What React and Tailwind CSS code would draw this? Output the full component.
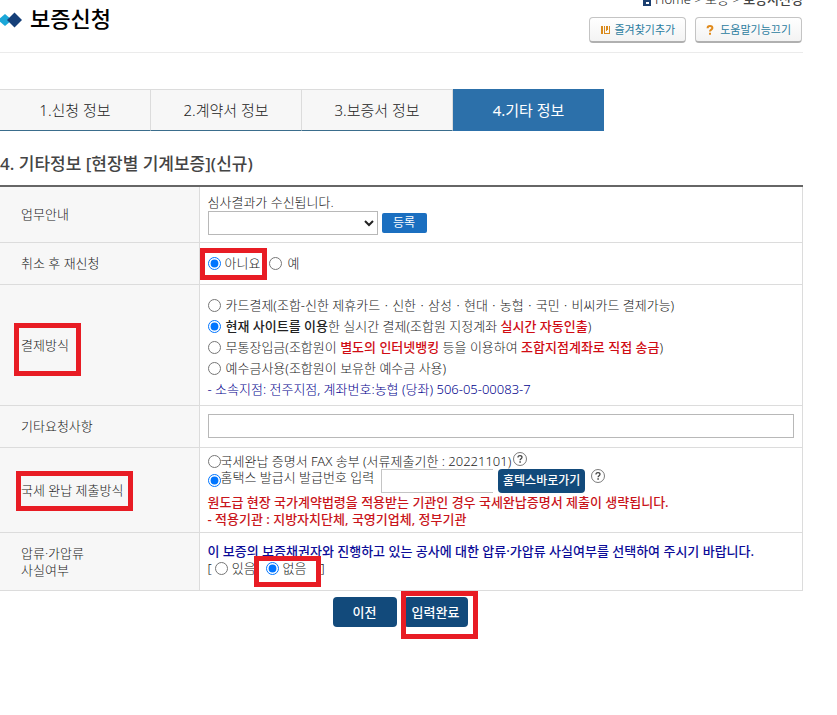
import { useState } from "react";

const steps = ["1.신청 정보", "2.계약서 정보", "3.보증서 정보", "4.기타 정보"];

// red frame around a field that needs attention; goes inside a relative parent
function Mark({ className }) {
  return <span aria-hidden="true" className={`absolute border-[5px] border-[#e81c24] pointer-events-none ${className}`} />;
}

function Radio({ id, name, value, checked, onChange, className = "" }) {
  return (
    <input
      type="radio"
      id={id}
      name={name}
      value={value}
      checked={checked}
      onChange={() => onChange(value)}
      className={`w-[13px] h-[13px] shrink-0 ${className}`}
    />
  );
}

function Row({ label, cellClass, children }) {
  return (
    <tr className="border-b border-[#dcdcdc]">
      <th scope="row" className="w-[199px] bg-[#f7f7f7] border-r border-[#dcdcdc] pl-[21px] text-left font-light align-middle">
        {label}
      </th>
      <td className={`pl-2 pr-2 align-top ${cellClass}`}>{children}</td>
    </tr>
  );
}

function HelpIcon({ className = "" }) {
  return (
    <button type="button" aria-label="도움말" className={`w-[14px] h-[14px] shrink-0 ${className}`}>
      <svg viewBox="0 0 14 14" width="14" height="14" fill="none" stroke="#444">
        <circle cx="7" cy="7" r="6.5" strokeWidth="0.7" />
        <path d="M5 5.400c0-1.200.9-1.800 2-1.800s2 .6 2 1.700c0 1.300-1.900 1.500-1.900 3" strokeWidth="1.3" />
        <path d="M7.100 9.300v1.500" strokeWidth="1.500" />
      </svg>
    </button>
  );
}

export default function App() {
  const [reapply, setReapply] = useState("no");
  const [payment, setPayment] = useState("realtime");
  const [taxProof, setTaxProof] = useState("hometax");
  const [seizure, setSeizure] = useState("none");

  return (
    <main className="min-h-screen bg-white pr-[34px] overflow-hidden text-[13px] leading-[17px] font-light text-[#222] font-['Noto_Sans','Noto_Sans_CJK_KR',sans-serif]">
      <header className="flex justify-between h-[53px] border-b border-[#ebebeb]">
        <div className="flex items-start gap-2">
          <svg viewBox="0 0 22 16" width="22" height="16" className="mt-3">
            <path d="M-2 8l7-6 7 6-7 6z" fill="#1ba7d8" />
            <path d="M7 8l7.500-7.500L22 8l-7.500 7.500z" fill="#153f78" />
          </svg>
          <h1 className="mt-1 text-[22px] leading-[28px] font-medium text-black">보증신청</h1>
        </div>
        <div className="flex flex-col items-end">
          <nav className="flex items-center gap-1 -mt-[9px] h-[17px]">
            <svg viewBox="0 0 8 12" width="8" height="12">
              <path d="M0 0h8v12H0z" fill="#1c3f70" />
              <path d="M3 8h3v2H3z" fill="#fff" />
            </svg>
            <span><a href="#home">Home</a> &gt; <a href="#guarantee">보증</a> &gt; <span className="font-medium text-[#444]">보증서신청</span></span>
          </nav>
          <div className="flex gap-[9px] mt-[9px] mr-[1px] text-[11px] font-normal text-[#2b7c9f]">
            <button type="button" className="flex items-center gap-1 h-[26px] px-[10px] rounded-[4px] border border-[#c4c4c4] border-b-2 border-b-[#b0b0b0] bg-gradient-to-b from-white to-[#f3f3f3]">
              <svg viewBox="0 0 10 10" width="10" height="10" fill="#d98a1c">
                <path d="M1 1h2v8H1zM4 1h1v8H4zM5 8h4V1h1v8H5zM6 1h2v4H7v1H6z" />
              </svg>
              즐겨찾기추가
            </button>
            <button type="button" className="flex items-center gap-[6px] h-[26px] px-[10px] rounded-[4px] border border-[#c4c4c4] border-b-2 border-b-[#b0b0b0] bg-gradient-to-b from-white to-[#f3f3f3]">
              <svg viewBox="0 0 8 10" width="8" height="10" fill="none" stroke="#e08a1c" strokeWidth="2">
                <path d="M1.600 3.200C1.600 1.800 2.500 1.100 4 1.100s2.400.8 2.400 2C6.400 4.700 4 4.600 4 6.600" />
                <path d="M4 7.800v2" />
              </svg>
              도움말기능끄기
            </button>
          </div>
        </div>
      </header>

      <ol className="flex mt-9 h-[42px] text-[15px]">
        {steps.map((step, i) => (
          <li
            key={step}
            aria-current={i === 3 ? "step" : undefined}
            className={`w-[151px] flex items-center justify-center border-t border-b ${
              i === 3
                ? "bg-[#2c70aa] border-[#2c70aa] text-white font-normal"
                : "bg-[#f7f7f7] border-r border-t-[#dcdcdc] border-r-[#dcdcdc] border-b-[#3a6d8c]"
            }`}
          >
            {step}
          </li>
        ))}
      </ol>

      <h2 className="mt-[21px] mb-[9px] text-[17px] leading-[24px] font-medium text-[#444]">4. 기타정보 [현장별 기계보증](신규)</h2>

      <table className="w-full border-collapse border-t-2 border-t-[#666] border-r border-r-[#dcdcdc]">
        <tbody>
          <Row label={<label htmlFor="notice">업무안내</label>} cellClass="pt-[7px] pb-[7px]">
            <p>심사결과가 수신됩니다.</p>
            <div className="flex items-center gap-1">
              <select id="notice" className="w-[170px] h-6 border border-[#b8b8b8] bg-white" />
              <button type="button" className="w-[45px] h-5 rounded-[2px] bg-[#1b6fc0] text-white text-xs leading-[20px] font-normal">등록</button>
            </div>
          </Row>

          <Row label="취소 후 재신청" cellClass="py-3">
            <div className="flex items-center">
              <span className="relative flex items-center gap-1">
                <Radio id="re-no" name="reapply" value="no" checked={reapply === "no"} onChange={setReapply} />
                <label htmlFor="re-no">아니요</label>
                <Mark className="-left-2 -right-[7px] -top-[7px] -bottom-2" />
              </span>
              <span className="flex items-center gap-[5px] ml-[9px]">
                <Radio id="re-yes" name="reapply" value="yes" checked={reapply === "yes"} onChange={setReapply} />
                <label htmlFor="re-yes">예</label>
              </span>
            </div>
          </Row>

          <Row
            label={
              <span className="relative inline-block">
                결제방식
                <Mark className="-left-[7px] -right-3 -top-[14px] -bottom-[22px]" />
              </span>
            }
            cellClass="pt-[10px] pb-[5px]"
          >
            <div className="leading-[21px]">
              <div className="flex items-center gap-[5px]">
                <Radio id="pay-card" name="payment" value="card" checked={payment === "card"} onChange={setPayment} />
                <label htmlFor="pay-card">카드결제(조합-신한 제휴카드ㆍ신한ㆍ삼성ㆍ현대ㆍ농협ㆍ국민ㆍ비씨카드 결제가능)</label>
              </div>
              <div className="flex items-center gap-[5px]">
                <Radio id="pay-realtime" name="payment" value="realtime" checked={payment === "realtime"} onChange={setPayment} />
                <label htmlFor="pay-realtime">
                  <b className="font-medium">현재 사이트를 이용</b>한 실시간 결제(조합원 지정계좌 <b className="font-medium text-[#d00c14]">실시간 자동인출</b>)
                </label>
              </div>
              <div className="flex items-center gap-[5px]">
                <Radio id="pay-transfer" name="payment" value="transfer" checked={payment === "transfer"} onChange={setPayment} />
                <label htmlFor="pay-transfer">
                  무통장입금(조합원이 <b className="font-medium text-[#d00c14]">별도의 인터넷뱅킹</b> 등을 이용하여 <b className="font-medium text-[#d00c14]">조합지점계좌로 직접 송금</b>)
                </label>
              </div>
              <div className="flex items-center gap-[5px]">
                <Radio id="pay-deposit" name="payment" value="deposit" checked={payment === "deposit"} onChange={setPayment} />
                <label htmlFor="pay-deposit">예수금사용(조합원이 보유한 예수금 사용)</label>
              </div>
              <p className="text-[#00008c]">- 소속지점: 전주지점, 계좌번호:농협 (당좌) 506-05-00083-7</p>
            </div>
          </Row>

          <Row label={<label htmlFor="request">기타요청사항</label>} cellClass="pt-2 pb-[9px]">
            <input id="request" type="text" className="block w-full h-6 px-1 border border-[#b8b8b8]" />
          </Row>

          <Row
            label={
              <span className="relative inline-block">
                국세 완납 제출방식
                <Mark className="-left-[5px] -right-[10px] -top-[11px] -bottom-3" />
              </span>
            }
            cellClass="pt-[5px] pb-1"
          >
            <div className="flex items-center h-4">
              <Radio id="tax-fax" name="taxProof" value="fax" checked={taxProof === "fax"} onChange={setTaxProof} />
              <label htmlFor="tax-fax">국세완납 증명서 FAX 송부 (서류제출기한 : 20221101)</label>
              <HelpIcon className="ml-[2px] mb-1" />
            </div>
            <div className="flex items-start h-[25px]">
              <Radio id="tax-hometax" name="taxProof" value="hometax" checked={taxProof === "hometax"} onChange={setTaxProof} className="mt-[5px]" />
              <label htmlFor="tax-hometax" className="leading-[16px]">홈택스 발급시 발급번호 입력</label>
              <input type="text" aria-label="발급번호" className="w-[112px] h-6 ml-[7px] px-1 border border-r-0 border-[#c4c4c4]" />
              <button type="button" className="w-[87px] h-6 ml-[5px] rounded-[4px] bg-[#124a7b] text-white text-xs leading-[24px] font-medium">홈텍스바로가기</button>
              <HelpIcon className="ml-[6px]" />
            </div>
            <p className="font-medium text-[#c9151b]">
              원도급 현장 국가계약법령을 적용받는 기관인 경우 국세완납증명서 제출이 생략됩니다.<br />
              - 적용기관 : 지방자치단체, 국영기업체, 정부기관
            </p>
          </Row>

          <Row label={<>압류·가압류<br />사실여부</>} cellClass="pt-[10px] pb-[13px]">
            <p className="font-medium text-[#0c0c98]">이 보증의 보증채권자와 진행하고 있는 공사에 대한 압류·가압류 사실여부를 선택하여 주시기 바랍니다.</p>
            <div className="flex items-center">
              <span>[</span>
              <span className="flex items-center gap-1 ml-[3px]">
                <Radio id="seize-yes" name="seizure" value="yes" checked={seizure === "yes"} onChange={setSeizure} />
                <label htmlFor="seize-yes">있음</label>
              </span>
              <span className="relative flex items-center gap-1 ml-[10px]">
                <Radio id="seize-none" name="seizure" value="none" checked={seizure === "none"} onChange={setSeizure} />
                <label htmlFor="seize-none">없음</label>
                <Mark className="-left-3 -right-[14px] -top-1 -bottom-[10px]" />
              </span>
              <span className="ml-[14px]">]</span>
            </div>
          </Row>
        </tbody>
      </table>

      <div className="flex justify-center gap-[7px] mt-[6px] mr-[3px] text-white font-medium">
        <button type="button" className="w-16 h-[30px] rounded-[4px] bg-[#124a7b]">이전</button>
        <span className="relative">
          <button type="button" className="w-16 h-[30px] rounded-[4px] bg-[#124a7b]">입력완료</button>
          <Mark className="-left-[3px] -right-[10px] -top-[6px] -bottom-3" />
        </span>
      </div>
    </main>
  );
}
